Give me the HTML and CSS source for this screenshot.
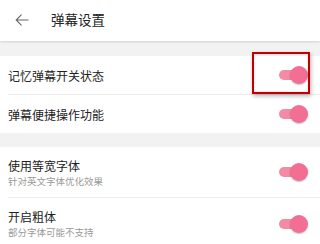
FILE: index.html
```html
<!DOCTYPE html>
<html lang="zh-CN">
<head>
<meta charset="utf-8">
<link rel="stylesheet" href="styles.css">
</head>
<body>
<div class="header">
  <svg class="back" viewBox="0 0 14 12" width="14" height="12">
    <path d="M13.5 6H1.2M6.5 0.7L1.2 6L6.5 11.3" fill="none" stroke="#666" stroke-width="1.1"/>
  </svg>
  <span class="title">弹幕设置</span>
</div>

<div class="group first">
  <div class="row h39">
    <div class="text"><div class="label">记忆弹幕开关状态</div></div>
    <div class="switch"></div>
  </div>
  <div class="row h38">
    <div class="text"><div class="label">弹幕便捷操作功能</div></div>
    <div class="switch"></div>
  </div>
</div>

<div class="group second">
  <div class="row h51">
    <div class="text">
      <div class="label">使用等宽字体</div>
      <div class="sub">针对英文字体优化效果</div>
    </div>
    <div class="switch"></div>
  </div>
  <div class="row h51">
    <div class="text">
      <div class="label">开启粗体</div>
      <div class="sub">部分字体可能不支持</div>
    </div>
    <div class="switch"></div>
  </div>
</div>

<div class="highlight"></div>
</body>
</html>
```
FILE: styles.css
```css
html, body {
  margin: 0;
  padding: 0;
  background: #f2f2f2;
  font-family: "Noto Sans CJK SC", "Noto Sans", sans-serif;
  overflow: hidden;
}
.header {
  position: relative;
  z-index: 1;
  height: 41px;
  background: #fff;
  display: flex;
  align-items: center;
  padding-left: 15px;
  padding-bottom: 2px;
  box-sizing: border-box;
  box-shadow: 0 1px 2px rgba(0,0,0,0.14);
}
.back {
  display: block;
  margin-right: 22px;
}
.title {
  font-size: 13.5px;
  color: #222;
  line-height: 1;
}
.group {
  background: #fff;
}
.group.first { margin-top: 15px; }
.group.second { margin-top: 14px; }
.row {
  display: flex;
  align-items: center;
  justify-content: space-between;
  margin-left: 8px;
  padding-right: 12px;
  border-bottom: 1px solid #ececec;
  box-sizing: border-box;
}
.row:last-child { border-bottom: none; }
.h39 { height: 39px; }
.h38 { height: 38px; }
.h51 { height: 51px; }
.text {
  display: flex;
  flex-direction: column;
}
.label {
  font-size: 12px;
  line-height: 17px;
  color: #222;
}
.sub {
  font-size: 9.5px;
  line-height: 14px;
  color: #9a9a9a;
}
.switch {
  position: relative;
  width: 29px;
  height: 18px;
  flex: none;
}
.switch::before {
  content: "";
  position: absolute;
  left: 0;
  top: 4px;
  width: 26px;
  height: 10px;
  border-radius: 5px;
  background: #f48ba6;
}
.switch::after {
  content: "";
  position: absolute;
  right: 0;
  top: 0;
  width: 18px;
  height: 18px;
  border-radius: 50%;
  background: #f36e93;
  box-shadow: 0 1px 1.5px rgba(0,0,0,0.25);
}
.highlight {
  position: absolute;
  left: 252px;
  top: 52px;
  width: 58px;
  height: 42px;
  box-sizing: border-box;
  border: 2px solid #c00000;
  box-shadow: 1px 2px 4px rgba(0,0,0,0.3), inset 0 0 3px rgba(0,0,0,0.15);
}
```
